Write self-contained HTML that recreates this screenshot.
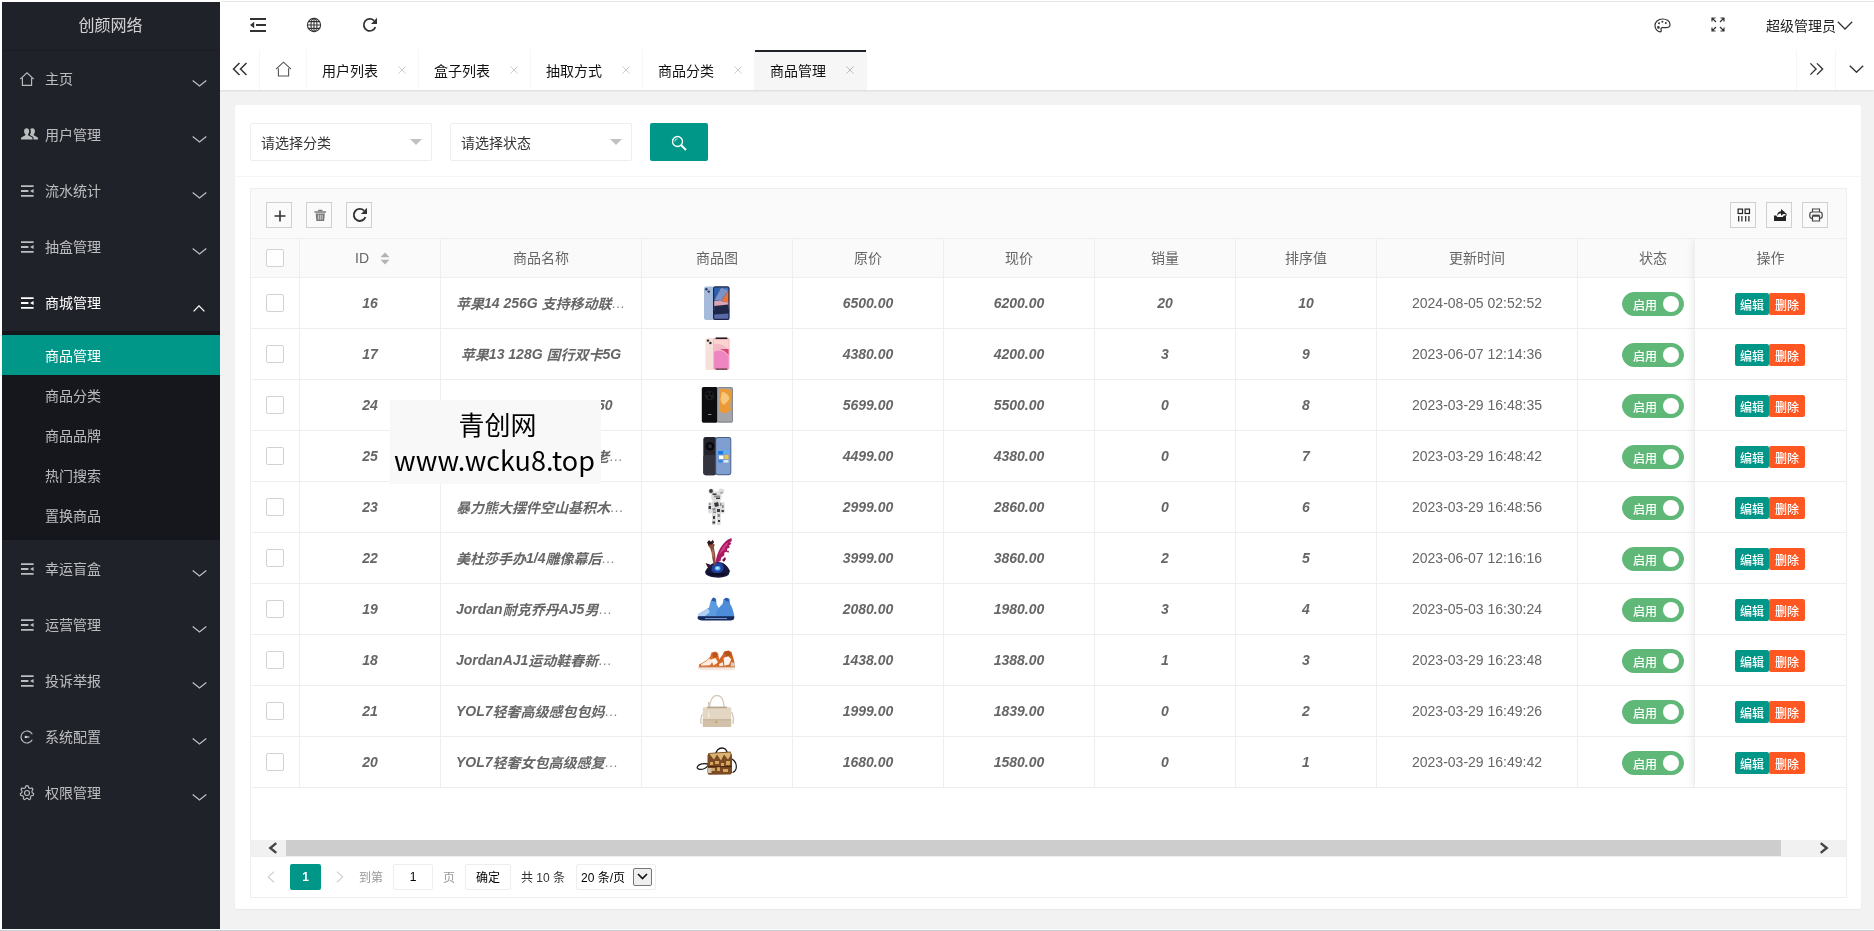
<!DOCTYPE html>
<html lang="zh-CN">
<head>
<meta charset="utf-8">
<title>商品管理</title>
<style>
*{box-sizing:border-box;}
html,body{margin:0;padding:0;}
html{overflow:hidden;background:#fff;}
body{width:1874px;height:931px;overflow:hidden;position:relative;background:#fff;will-change:transform;
 font-family:"Liberation Sans","Noto Sans CJK SC",sans-serif;font-size:14px;color:#333;line-height:1;}
.abs{position:absolute;}
svg{display:block;}
/* ---------- sidebar ---------- */
#side{position:absolute;left:2px;top:2px;width:218px;height:927px;background:#20222A;overflow:hidden;}
#logo{position:absolute;left:-1px;top:0;width:219px;height:47px;line-height:48px;text-align:center;color:rgba(255,255,255,.8);font-size:16px;box-shadow:0 1px 2px 0 rgba(0,0,0,.15);}
.mi{position:absolute;left:0;width:218px;height:56px;color:rgba(255,255,255,.7);}
.mi .tx{position:absolute;left:43px;top:20px;font-size:14px;line-height:16px;white-space:nowrap;}
.mi .ic{position:absolute;left:17px;top:20px;width:16px;height:16px;}
.mi .ar{position:absolute;left:190px;top:29px;width:15px;height:7px;}
.mi.on{color:#fff;}
#child{position:absolute;left:0;top:329px;width:218px;height:209px;background:rgba(0,0,0,.3);}
.ci{position:absolute;left:0;width:218px;height:40px;color:rgba(255,255,255,.7);}
.ci span{position:absolute;left:43px;top:13px;font-size:14px;line-height:16px;white-space:nowrap;}
.ci.on{background:#009688;color:#fff;}
/* ---------- header ---------- */
#topline{position:absolute;left:222px;top:1px;width:1652px;height:1px;background:#e6e6e6;}
#hdr{position:absolute;left:220px;top:2px;width:1654px;height:48px;background:#fff;}
#tabs{position:absolute;left:220px;top:50px;width:1654px;height:40px;background:#fff;box-shadow:0 1px 2px 0 rgba(0,0,0,.1);}
.tab{position:absolute;top:0;height:40px;border-right:1px solid #f6f6f6;}
.tab .t{position:absolute;left:15px;top:13px;font-size:14px;line-height:16px;color:#111;white-space:nowrap;}
.tab .x{position:absolute;left:90px;top:15px;width:10px;height:10px;}
.tab.on{background:#f6f6f6;}
.tab.on:before{content:"";position:absolute;left:0;top:0;width:100%;height:2px;background:#20222A;}
#bg{position:absolute;left:220px;top:90px;width:1654px;height:841px;background:#f2f2f2;z-index:-1;}
/* ---------- card ---------- */
#card{position:absolute;left:235px;top:105px;width:1626px;height:804px;background:#fff;border-radius:2px;box-shadow:0 1px 2px 0 rgba(0,0,0,.05);}
.sel{position:absolute;top:123px;height:38px;width:182px;border:1px solid #eee;border-radius:2px;background:#fff;}
.sel span{position:absolute;left:10px;top:11px;font-size:14px;line-height:16px;color:#333;white-space:nowrap;}
.sel i{position:absolute;right:9px;top:15px;width:0;height:0;border:6px solid transparent;border-top-color:#c2c2c2;}
#sbtn{position:absolute;left:650px;top:123px;width:58px;height:38px;background:#009688;border-radius:2px;}
#cardline{position:absolute;left:235px;top:176px;width:1626px;height:1px;background:#f6f6f6;}
/* ---------- table ---------- */
#tbl{position:absolute;left:250px;top:188px;width:1597px;height:710px;border:1px solid #eee;background:#fff;}
#tool{position:absolute;left:0;top:0;width:1595px;height:50px;background:#fafafa;border-bottom:1px solid #eee;}
.tb{position:absolute;top:13px;width:26px;height:26px;border:1px solid #d0d0d0;background:#fafafa;}
#thead{position:absolute;left:0;top:50px;width:1595px;height:39px;background:#fafafa;border-bottom:1px solid #eee;}
.th{position:absolute;top:0;height:38px;border-right:1px solid #eee;text-align:center;font-size:14px;line-height:39px;color:#666;white-space:nowrap;overflow:hidden;}
.row{position:absolute;left:0;width:1595px;height:51px;border-bottom:1px solid #eee;}
.td{position:absolute;top:0;height:50px;border-right:1px solid #eee;text-align:center;font-size:14px;line-height:50px;color:#666;white-space:nowrap;overflow:hidden;}
.td.b{font-weight:bold;font-style:italic;}
.td .c{position:relative;top:1px;}
.td .el{font-weight:normal;color:#888;}
.cb{position:absolute;left:15px;width:18px;height:18px;border:1px solid #d2d2d2;border-radius:2px;background:#fff;}
.sw{position:absolute;width:62px;height:24px;border-radius:12px;background:#5FB878;border:1px solid #5FB878;}
.sw em{position:absolute;left:10px;top:5.500px;font-style:normal;font-weight:500;font-size:12px;line-height:14px;color:#fff;}
.sw i{position:absolute;right:4px;top:3px;width:16px;height:16px;border-radius:8px;background:#fff;}
#fix{position:absolute;left:1443px;top:50px;width:152px;border-left:1px solid #eee;height:549px;background:#fff;box-shadow:-1px 0 8px rgba(0,0,0,.08);clip-path:inset(0 0 0 -12px);}
.fr{position:absolute;left:0;width:151px;height:51px;border-bottom:1px solid #eee;background:#fff;}
.btn{position:absolute;top:15px;height:22px;width:34px;border-radius:2px;color:#fff;font-size:12px;line-height:27px;text-align:center;overflow:hidden;font-weight:500;}
.btn.e{background:#009688;left:40px;}
.btn.d{background:#FF5722;left:74px;width:36px;}
#hs{position:absolute;left:0;top:651px;width:1595px;height:16px;background:#f1f1f1;}
#hs b{position:absolute;left:35px;top:0;width:1495px;height:16px;background:#cdcdcd;}
/* pager */
#pg{position:absolute;left:0;top:667px;width:1595px;height:40px;border-top:1px solid #eee;font-size:12px;color:#333;}
#pg .p{position:absolute;top:7px;height:26px;line-height:28px;white-space:nowrap;overflow:hidden;}
/* watermark */
#wm{position:absolute;left:390px;top:400px;width:211px;height:84px;background:#f8f8f8;color:#000;white-space:nowrap;font-family:"Noto Sans CJK SC",sans-serif;}
#wm span{position:absolute;left:0;width:211px;text-align:center;}
#wm .a{top:6px;font-size:26px;line-height:36px;left:2px}
#wm .b{top:42px;font-size:27px;line-height:36px;left:-1px}
#botline{position:absolute;left:0;top:929px;width:1874px;height:2px;background:#f8fcfe;border-bottom:1px solid #c9ced3;}

.pi{filter:blur(.35px);}
</style>
</head>
<body>
<div id="side">
<div id="logo">创颜网络</div>
<div class="mi" style="top:49px"><svg class="ic" viewBox="0 0 16 16"><path d="M1.300 8.200 L8 1.800 L14.700 8.200 M3.400 7 V14.300 H12.600 V7" fill="none" stroke="currentColor" stroke-width="1.150"/></svg><span class="tx">主页</span><svg class="ar" viewBox="0 0 15 7"><path d="M0.700 0.600 L7.500 6 L14.300 0.600" fill="none" stroke="currentColor" stroke-width="1.300"/></svg></div>
<div class="mi" style="top:105px"><svg class="ic" style="left:19px;width:17px;height:17px;top:19px" viewBox="0 0 16 16"><path d="M5.300 2.200c1.500 0 2.400 1.200 2.400 2.800 0 1.200-.5 2.200-1.100 2.800v1l3.600 1.700c.4.2.6.5.6.9v1.400H0v-1.400c0-.4.2-.7.6-.9L4.100 8.800v-1C3.400 7.200 2.900 6.200 2.900 5c0-1.600 .9-2.800 2.400-2.800z M10.700 2.200c1.500 0 2.400 1.200 2.400 2.800 0 1.200-.5 2.200-1.100 2.800v1l3.400 1.700c.4.2.6.5.6.9v1.400h-4.200v-1.600c0-.6-.3-1.100-.9-1.400L8.300 8.500c.6-.9 1-2 1-3.300 0-.9-.2-1.700-.6-2.400.5-.4 1.200-.6 2-.6z" fill="currentColor"/></svg><span class="tx">用户管理</span><svg class="ar" viewBox="0 0 15 7"><path d="M0.700 0.600 L7.500 6 L14.300 0.600" fill="none" stroke="currentColor" stroke-width="1.300"/></svg></div>
<div class="mi" style="top:161px"><svg class="ic" viewBox="0 0 16 16"><path d="M2 2.300h12.600v1.800H2z M2 7.100h7.400v1.800H2z M2 11.900h12.600v1.800H2z M11 8 L14.600 5.900 V10.100z" fill="currentColor"/></svg><span class="tx">流水统计</span><svg class="ar" viewBox="0 0 15 7"><path d="M0.700 0.600 L7.500 6 L14.300 0.600" fill="none" stroke="currentColor" stroke-width="1.300"/></svg></div>
<div class="mi" style="top:217px"><svg class="ic" viewBox="0 0 16 16"><path d="M2 2.300h12.600v1.800H2z M2 7.100h7.400v1.800H2z M2 11.900h12.600v1.800H2z M11 8 L14.600 5.900 V10.100z" fill="currentColor"/></svg><span class="tx">抽盒管理</span><svg class="ar" viewBox="0 0 15 7"><path d="M0.700 0.600 L7.500 6 L14.300 0.600" fill="none" stroke="currentColor" stroke-width="1.300"/></svg></div>
<div class="mi on" style="top:273px"><svg class="ic" viewBox="0 0 16 16"><path d="M2 2.300h12.600v1.800H2z M2 7.100h7.400v1.800H2z M2 11.900h12.600v1.800H2z M11 8 L14.600 5.900 V10.100z" fill="currentColor"/></svg><span class="tx">商城管理</span><svg class="ar" style="left:191px;top:30px;width:12px" viewBox="0 0 12 7"><path d="M0.600 6.400 L6 0.900 L11.400 6.400" fill="none" stroke="currentColor" stroke-width="1.300"/></svg></div>
<div class="mi" style="top:539px"><svg class="ic" viewBox="0 0 16 16"><path d="M2 2.300h12.600v1.800H2z M2 7.100h7.400v1.800H2z M2 11.900h12.600v1.800H2z M11 8 L14.600 5.900 V10.100z" fill="currentColor"/></svg><span class="tx">幸运盲盒</span><svg class="ar" viewBox="0 0 15 7"><path d="M0.700 0.600 L7.500 6 L14.300 0.600" fill="none" stroke="currentColor" stroke-width="1.300"/></svg></div>
<div class="mi" style="top:595px"><svg class="ic" viewBox="0 0 16 16"><path d="M2 2.300h12.600v1.800H2z M2 7.100h7.400v1.800H2z M2 11.900h12.600v1.800H2z M11 8 L14.600 5.900 V10.100z" fill="currentColor"/></svg><span class="tx">运营管理</span><svg class="ar" viewBox="0 0 15 7"><path d="M0.700 0.600 L7.500 6 L14.300 0.600" fill="none" stroke="currentColor" stroke-width="1.300"/></svg></div>
<div class="mi" style="top:651px"><svg class="ic" viewBox="0 0 16 16"><path d="M2 2.300h12.600v1.800H2z M2 7.100h7.400v1.800H2z M2 11.900h12.600v1.800H2z M11 8 L14.600 5.900 V10.100z" fill="currentColor"/></svg><span class="tx">投诉举报</span><svg class="ar" viewBox="0 0 15 7"><path d="M0.700 0.600 L7.500 6 L14.300 0.600" fill="none" stroke="currentColor" stroke-width="1.300"/></svg></div>
<div class="mi" style="top:707px"><svg class="ic" viewBox="0 0 16 16"><path d="M13.300 5.200 A6 6 0 1 0 13.300 10.800" fill="none" stroke="currentColor" stroke-width="1.200"/><path d="M6.200 8h4.200" stroke="currentColor" stroke-width="1.300"/><circle cx="6.800" cy="8" r="1.200" fill="currentColor"/></svg><span class="tx">系统配置</span><svg class="ar" viewBox="0 0 15 7"><path d="M0.700 0.600 L7.500 6 L14.300 0.600" fill="none" stroke="currentColor" stroke-width="1.300"/></svg></div>
<div class="mi" style="top:763px"><svg class="ic" style="left:16px;top:19px;width:18px;height:18px" viewBox="0 0 16 16"><circle cx="8" cy="8" r="2.200" fill="none" stroke="currentColor" stroke-width="1"/><path d="M8 1.500 l1 .2 .5 1.600 1.300 .7 1.600-.5 .9 1.300 -.9 1.400 .2 1.500 1.400 .9 -.4 1.500 -1.700 .3 -.9 1.200 .3 1.600 -1.400 .7 -1.200-1.100 h-1.400 l-1.200 1.100 -1.400-.7 .3-1.600 -.9-1.200 -1.700-.3 -.4-1.500 1.400-.9 .2-1.500 -.9-1.400 .9-1.300 1.600 .5 1.300-.7 .5-1.600z" fill="none" stroke="currentColor" stroke-width="1" stroke-linejoin="round"/></svg><span class="tx">权限管理</span><svg class="ar" viewBox="0 0 15 7"><path d="M0.700 0.600 L7.500 6 L14.300 0.600" fill="none" stroke="currentColor" stroke-width="1.300"/></svg></div>
<div id="child">
<div class="ci on" style="top:4px"><span>商品管理</span></div>
<div class="ci" style="top:44px"><span>商品分类</span></div>
<div class="ci" style="top:84px"><span>商品品牌</span></div>
<div class="ci" style="top:124px"><span>热门搜索</span></div>
<div class="ci" style="top:164px"><span>置换商品</span></div>
</div>
</div>
<div id="bg"></div>
<div id="topline"></div>
<div id="hdr">
<svg class="abs" style="left:30px;top:15px" width="16" height="16" viewBox="0 0 16 16"><path d="M0 1h16v2H0z M6 7h10v2H6z M0 13h16v2H0z M4.200 4.800 V11.200 L0 8z" fill="#333"/></svg>
<svg class="abs" style="left:86px;top:15px" width="16" height="16" viewBox="0 0 16 16"><g fill="none" stroke="#333" stroke-width="1.100"><circle cx="8" cy="8" r="6.600"/><ellipse cx="8" cy="8" rx="3" ry="6.600"/><path d="M8 1.400V14.600 M1.400 8H14.600 M2.400 4.600H13.600 M2.400 11.400H13.600"/></g></svg>
<svg class="abs" style="left:142px;top:15px" width="16" height="16" viewBox="0 0 16 16"><path d="M12.040 3.660 A6 6 0 1 0 13.440 9.950" fill="none" stroke="#333" stroke-width="1.800"/><path d="M15 0.700 L15 6.900 L9 6.900z" fill="#333"/></svg>
<svg class="abs" style="left:1434px;top:16px" width="17" height="15" viewBox="0 0 17 15"><path d="M8.500 1 C4 1 1 4 1 7.500 C1 11 3.500 13.800 6 13.800 C7.600 13.800 7.400 12.400 7 11.600 C6.600 10.600 7.200 9.600 8.400 9.600 H12 C14.400 9.600 16 8.200 16 6.400 C16 3.400 12.800 1 8.500 1z" fill="none" stroke="#333" stroke-width="1.200"/><circle cx="5" cy="5.200" r="1" fill="#333"/><circle cx="8.400" cy="3.800" r="1" fill="#333"/><circle cx="11.800" cy="5" r="1" fill="#333"/><circle cx="4.400" cy="9.400" r="1.300" fill="#333"/></svg>
<svg class="abs" style="left:1491px;top:15px" width="14" height="15" viewBox="0 0 14 15"><g fill="none" stroke="#333" stroke-width="1.200"><path d="M1 4.500V1H4.500 M1 1 L5 5"/><path d="M13 4.500V1H9.500 M13 1 L9 5"/><path d="M1 10.500V14H4.500 M1 14 L5 10"/><path d="M13 10.500V14H9.500 M13 14 L9 10"/></g></svg>
<span class="abs" style="left:1546px;top:16px;font-size:14px;line-height:16px;color:#222;white-space:nowrap">超级管理员</span>
<svg class="abs" style="left:1617px;top:19px" width="16" height="9" viewBox="0 0 16 9"><path d="M0.800 0.800 L8 8 L15.200 0.800" fill="none" stroke="#333" stroke-width="1.300"/></svg>
</div>
<div id="tabs">
<div class="tab" style="left:0;width:40px"><svg class="abs" style="left:12px;top:12px" width="16" height="14" viewBox="0 0 16 14"><path d="M7.500 1 L1.500 7 L7.500 13 M14.500 1 L8.500 7 L14.500 13" fill="none" stroke="#333" stroke-width="1.500"/></svg></div>
<div class="tab" style="left:40px;width:47px"><svg class="abs" style="left:15px;top:11px" width="17" height="16" viewBox="0 0 17 16"><path d="M1 8.200 L8.500 1.200 L16 8.200 M3.400 7.200 V15 H13.600 V7.200" fill="none" stroke="#555" stroke-width="1.100"/></svg></div>
<div class="tab" style="left:87px;width:112px"><span class="t">用户列表</span><svg class="x" viewBox="0 0 10 10"><path d="M1.500 1.500 L8.500 8.500 M8.500 1.500 L1.500 8.500" stroke="#ccc" stroke-width="1" fill="none"/></svg></div>
<div class="tab" style="left:199px;width:112px"><span class="t">盒子列表</span><svg class="x" viewBox="0 0 10 10"><path d="M1.500 1.500 L8.500 8.500 M8.500 1.500 L1.500 8.500" stroke="#ccc" stroke-width="1" fill="none"/></svg></div>
<div class="tab" style="left:311px;width:112px"><span class="t">抽取方式</span><svg class="x" viewBox="0 0 10 10"><path d="M1.500 1.500 L8.500 8.500 M8.500 1.500 L1.500 8.500" stroke="#ccc" stroke-width="1" fill="none"/></svg></div>
<div class="tab" style="left:423px;width:112px"><span class="t">商品分类</span><svg class="x" viewBox="0 0 10 10"><path d="M1.500 1.500 L8.500 8.500 M8.500 1.500 L1.500 8.500" stroke="#ccc" stroke-width="1" fill="none"/></svg></div>
<div class="tab on" style="left:535px;width:112px"><span class="t">商品管理</span><svg class="x" viewBox="0 0 10 10"><path d="M1.500 1.500 L8.500 8.500 M8.500 1.500 L1.500 8.500" stroke="#bbb" stroke-width="1" fill="none"/></svg></div>
<div class="tab" style="left:1576px;width:40px;border-left:1px solid #f6f6f6"><svg class="abs" style="left:12px;top:12px" width="15" height="14" viewBox="0 0 16 14"><path d="M1.500 1 L7.500 7 L1.500 13 M8.500 1 L14.500 7 L8.500 13" fill="none" stroke="#333" stroke-width="1.500"/></svg></div>
<div class="tab" style="left:1616px;width:38px;border-right:0"><svg class="abs" style="left:13px;top:15px" width="15" height="8" viewBox="0 0 15 8"><path d="M0.800 0.800 L7.500 7.200 L14.200 0.800" fill="none" stroke="#333" stroke-width="1.400"/></svg></div>
</div>
<div id="card"></div>
<div class="sel" style="left:250px"><span>请选择分类</span><i></i></div>
<div class="sel" style="left:450px"><span>请选择状态</span><i></i></div>
<div id="sbtn"><svg class="abs" style="left:21px;top:12px" width="16" height="16" viewBox="0 0 16 16"><circle cx="6.500" cy="6.500" r="5" fill="none" stroke="#fff" stroke-width="1.300"/><path d="M10.200 10.200 L15 15" stroke="#fff" stroke-width="2" fill="none"/><path d="M3.800 6.500 A2.700 2.700 0 0 1 6.500 3.800" stroke="#fff" stroke-width="0.800" fill="none"/></svg></div>
<div id="cardline"></div>
<div id="tbl">
<div id="tool">
<div class="tb" style="left:15px"><svg class="abs" style="left:7px;top:7px" width="12" height="12" viewBox="0 0 12 12"><path d="M6 0.500V11.500 M0.500 6H11.500" stroke="#333" stroke-width="1.600"/></svg></div>
<div class="tb" style="left:55px"><svg class="abs" style="left:7px;top:6px" width="12.500" height="12.500" viewBox="0 0 12 12"><path d="M0.500 2.200h11v1.300h-11z M4 0.600h4v1.200H4z M1.600 4.200h8.800l-.700 7.400H2.300z" fill="#777"/><path d="M4.200 5.500v4.800 M6 5.500v4.800 M7.800 5.500v4.800" stroke="#fafafa" stroke-width="0.700"/></svg></div>
<div class="tb" style="left:95px"><svg class="abs" style="left:5px;top:4px" width="16" height="16" viewBox="0 0 16 16"><path d="M12.040 3.660 A6 6 0 1 0 13.440 9.950" fill="none" stroke="#333" stroke-width="1.900"/><path d="M15 0.700 L15 6.900 L9 6.900z" fill="#333"/></svg></div>
<div class="tb" style="left:1479px"><svg class="abs" style="left:6px;top:5px" width="14" height="14" viewBox="0 0 14 14"><g fill="none" stroke="#222" stroke-width="1.200"><rect x="1.100" y="1.100" width="4.400" height="4.400"/><rect x="8.100" y="1.100" width="4.400" height="4.400"/><path d="M1.700 8V13.500 M4.900 8V13.500 M8.700 8V13.500 M11.900 8V13.500"/></g></svg></div>
<div class="tb" style="left:1515px"><svg class="abs" style="left:6px;top:4px" width="14" height="15" viewBox="0 0 14 15"><path d="M1 8.500h2.200l1 1.600h5.600l1-1.600H13V14H1z" fill="#222"/><path d="M4.200 9 C4 6.200 5.500 4.500 8 4.300 V2 L12.200 5.400 L8 8.800 V6.500 C6.200 6.500 5.200 7.300 4.200 9z" fill="#222"/><path d="M9.500 6.500h3.500v2.500" fill="none" stroke="#222" stroke-width="1"/></svg></div>
<div class="tb" style="left:1551px"><svg class="abs" style="left:6px;top:5px" width="14" height="14" viewBox="0 0 14 14"><g fill="none" stroke="#444" stroke-width="1.200"><path d="M3.500 4V1h7v3"/><rect x="0.800" y="4" width="12.400" height="6.500" rx="2.400"/><path d="M3.500 8.200h7V13h-7z" fill="#fafafa"/><path d="M3.500 7.300h7" stroke-width="1.400"/></g></svg></div>
</div>
<div id="thead">
<div class="th" style="left:0px;width:49px"><i class="cb" style="top:10px"></i></div>
<div class="th" style="left:49px;width:141px"><span style="position:relative;left:-8px">ID</span><svg class="abs" style="left:80px;top:13px" width="10" height="13" viewBox="0 0 10 13"><path d="M5 0.500 L9.500 5.300 H0.500z M5 12.500 L9.500 7.700 H0.500z" fill="#b2b2b2"/></svg></div>
<div class="th" style="left:190px;width:201px">商品名称</div>
<div class="th" style="left:391px;width:151px">商品图</div>
<div class="th" style="left:542px;width:151px">原价</div>
<div class="th" style="left:693px;width:151px">现价</div>
<div class="th" style="left:844px;width:141px">销量</div>
<div class="th" style="left:985px;width:141px">排序值</div>
<div class="th" style="left:1126px;width:201px">更新时间</div>
<div class="th" style="left:1327px;width:151px">状态</div>
</div>
<div class="row" style="top:89px"><div class="td" style="left:0;width:49px"><i class="cb" style="top:16px"></i></div><div class="td b" style="left:49px;width:141px">16</div><div class="td b" style="left:190px;width:201px;padding:0 0 0 15px;text-align:left"><span class="c">苹果</span>14 256G <span class="c">支持移动联</span><span class="el">…</span></div><div class="td" style="left:391px;width:151px"><svg class="abs pi" style="left:50px;top:0" width="50" height="50" viewBox="692 278 50 50"><rect x="704" y="286.500" width="10.500" height="33.500" rx="2.200" fill="#a6bbdc"/><circle cx="706.400" cy="289.200" r="1.200" fill="#2b3652"/><circle cx="708.800" cy="291.600" r="1.200" fill="#2b3652"/><rect x="713" y="286.300" width="16.600" height="33.800" rx="2.200" fill="#1a2546"/><path d="M714.200 287.600h7l-7 13z" fill="#2c62ad"/><path d="M721.200 287.600h7.200v3z" fill="#3f79c4"/><path d="M728.400 290.600v12l-7.400-1.600z" fill="#e9733a"/><path d="M714.200 300.600l7-13 7.200 3-7.400 10.400z" fill="#7d93c8"/><path d="M714.200 301l6.800 .0 7.400 1.600v6l-14.200 2z" fill="#d9a5b4"/><path d="M714.200 306l14.200-1.500v9l-14.200 1z" fill="#1d2748"/><path d="M714.200 314.500l14.200-1v5.300h-14.200z" fill="#5968a6"/></svg></div><div class="td b" style="left:542px;width:151px">6500.00</div><div class="td b" style="left:693px;width:151px">6200.00</div><div class="td b" style="left:844px;width:141px">20</div><div class="td b" style="left:985px;width:141px">10</div><div class="td" style="left:1126px;width:201px">2024-08-05 02:52:52</div><div class="td" style="left:1327px;width:151px"><div class="sw" style="left:44px;top:14px"><em>启用</em><i></i></div></div></div>
<div class="row" style="top:140px"><div class="td" style="left:0;width:49px"><i class="cb" style="top:16px"></i></div><div class="td b" style="left:49px;width:141px">17</div><div class="td b" style="left:190px;width:201px;padding:0 15px;text-align:center"><span class="c">苹果</span>13 128G <span class="c">国行双卡</span>5G</div><div class="td" style="left:391px;width:151px"><svg class="abs pi" style="left:50px;top:0" width="50" height="50" viewBox="692 329 50 50"><rect x="705.400" y="338" width="9.500" height="32" rx="2.200" fill="#f5e1d9"/><circle cx="708" cy="340.600" r="1.200" fill="#26262a"/><circle cx="710.400" cy="343" r="1.200" fill="#26262a"/><rect x="713" y="337.400" width="16.600" height="32.700" rx="2.400" fill="#f6b9c6"/><rect x="715.500" y="337.400" width="12" height="1.600" rx=".8" fill="#1a1a1c"/><path d="M714 340h14.600v10c-4-5-9-7-14.600-6z" fill="#fbd3cf"/><path d="M714 352c5-3 10-1 14.600 4v13h-14.600z" fill="#ee86c2"/><path d="M720 349c3 1 6 3 8.600 6v-6z" fill="#d9457a"/><rect x="715.500" y="368.400" width="12" height="1.400" rx=".7" fill="#54323a"/></svg></div><div class="td b" style="left:542px;width:151px">4380.00</div><div class="td b" style="left:693px;width:151px">4200.00</div><div class="td b" style="left:844px;width:141px">3</div><div class="td b" style="left:985px;width:141px">9</div><div class="td" style="left:1126px;width:201px">2023-06-07 12:14:36</div><div class="td" style="left:1327px;width:151px"><div class="sw" style="left:44px;top:14px"><em>启用</em><i></i></div></div></div>
<div class="row" style="top:191px"><div class="td" style="left:0;width:49px"><i class="cb" style="top:16px"></i></div><div class="td b" style="left:49px;width:141px">24</div><div class="td b" style="left:190px;width:201px;padding:0 15px;text-align:center"><span class="c" style="visibility:hidden">华为</span> HUAWEI Mate 50</div><div class="td" style="left:391px;width:151px"><svg class="abs pi" style="left:50px;top:0" width="50" height="50" viewBox="692 380 50 50"><rect x="701.800" y="387" width="16" height="35.700" rx="1.800" fill="#0d0d0f"/><circle cx="709.500" cy="395.500" r="4.800" fill="#1e1e22"/><circle cx="707.500" cy="393.800" r="1.300" fill="#050506"/><circle cx="711.500" cy="393.800" r="1.300" fill="#050506"/><circle cx="709.500" cy="397.400" r="1.300" fill="#050506"/><rect x="708" y="414" width="3.400" height=".9" fill="#9a9a9a"/><rect x="717" y="387" width="16" height="35.700" rx="1.800" fill="#85878d"/><rect x="717.800" y="388" width="14.200" height="33.600" rx="1.200" fill="#a3a5aa"/><path d="M719 389.500c4-1.500 9-1 12.400 1v10c-2 3-1 6-.4 9-2 3-5 4-8 3.600-3-.8-4.600-3.800-4-7.600z" fill="#eb9a38"/><path d="M722 392c3 0 6 2 7 5s-2 5-4 7-4-2-4.500-5z" fill="#f6c77a"/></svg></div><div class="td b" style="left:542px;width:151px">5699.00</div><div class="td b" style="left:693px;width:151px">5500.00</div><div class="td b" style="left:844px;width:141px">0</div><div class="td b" style="left:985px;width:141px">8</div><div class="td" style="left:1126px;width:201px">2023-03-29 16:48:35</div><div class="td" style="left:1327px;width:151px"><div class="sw" style="left:44px;top:14px"><em>启用</em><i></i></div></div></div>
<div class="row" style="top:242px"><div class="td" style="left:0;width:49px"><i class="cb" style="top:16px"></i></div><div class="td b" style="left:49px;width:141px">25</div><div class="td b" style="left:190px;width:201px;padding:0 0 0 15px;text-align:left"><span class="c" style="visibility:hidden">华为</span> Mate40Pro 5G<span class="c" style="visibility:hidden">版</span><span class="c">老</span><span class="el">…</span></div><div class="td" style="left:391px;width:151px"><svg class="abs pi" style="left:50px;top:0" width="50" height="50" viewBox="692 431 50 50"><rect x="703.300" y="437" width="13" height="38.200" rx="2.400" fill="#23232b"/><rect x="703.300" y="455" width="13" height="20.200" rx="2.400" fill="#34343f"/><circle cx="710" cy="446.200" r="4.300" fill="#08080a"/><circle cx="710" cy="446.200" r="2" fill="#2a2a33"/><rect x="715.300" y="437" width="16" height="38.200" rx="2.400" fill="#4d5f86"/><rect x="716.200" y="438" width="14.200" height="36.200" rx="1.800" fill="#7f9fd0"/><rect x="718" y="451" width="5" height="3.500" fill="#1c78de"/><rect x="724" y="450" width="5" height="3.500" fill="#5fb0f2"/><rect x="719" y="455.500" width="4.500" height="3.500" fill="#fff"/><rect x="724.500" y="455" width="4" height="4" fill="#f3c53c"/><rect x="718.500" y="460" width="4" height="2.600" fill="#2f86e6"/><rect x="723.500" y="460" width="5" height="2.600" fill="#dfe9f7"/></svg></div><div class="td b" style="left:542px;width:151px">4499.00</div><div class="td b" style="left:693px;width:151px">4380.00</div><div class="td b" style="left:844px;width:141px">0</div><div class="td b" style="left:985px;width:141px">7</div><div class="td" style="left:1126px;width:201px">2023-03-29 16:48:42</div><div class="td" style="left:1327px;width:151px"><div class="sw" style="left:44px;top:14px"><em>启用</em><i></i></div></div></div>
<div class="row" style="top:293px"><div class="td" style="left:0;width:49px"><i class="cb" style="top:16px"></i></div><div class="td b" style="left:49px;width:141px">23</div><div class="td b" style="left:190px;width:201px;padding:0 0 0 15px;text-align:left"><span class="c">暴力熊大摆件空山基积木</span><span class="el">…</span></div><div class="td" style="left:391px;width:151px"><svg class="abs pi" style="left:50px;top:0" width="50" height="50" viewBox="692 482 50 50"><g fill="#dcdcdc"><circle cx="711.300" cy="491.300" r="2.800"/><circle cx="721.300" cy="491.300" r="2.800"/><rect x="711.200" y="491.500" width="10.300" height="9.500" rx="3.500"/><rect x="711.700" y="501" width="9.400" height="12.500" rx="1.500"/><rect x="708.200" y="502" width="3.600" height="11.500" rx="1.600"/><rect x="721" y="502" width="3.600" height="11.500" rx="1.600"/><rect x="712" y="512.500" width="4" height="12.500" rx="1.200"/><rect x="716.800" y="512.500" width="4" height="12.500" rx="1.200"/></g><g fill="#3a3a3e"><circle cx="711" cy="491" r="1.900"/><path d="M712.500 493.500h4v1.600h-4z M716 497.500h4v1.600h-4z M714 503l4-1 1 4-4 1z M708.600 506h2.400v3h-2.400z M717 509h3v3h-3z M713 516h2v3h-2z M718 520h2v2h-2z M721.500 510h2.400v2h-2.400z M712.500 521.500h2.500v2h-2.500z"/></g><g fill="#8e8e92"><path d="M714 495.600h6v1.600h-6z M712.500 508h3v2.400h-3z M717.500 514h2.400v3h-2.400z M720 503h1.500v3h-1.500z M720.500 492h2v1.500h-2z M713 511.500h3v1.500h-3z M709 503h1.500v2h-1.500z M722 505h1.600v3h-1.600z"/></g></svg></div><div class="td b" style="left:542px;width:151px">2999.00</div><div class="td b" style="left:693px;width:151px">2860.00</div><div class="td b" style="left:844px;width:141px">0</div><div class="td b" style="left:985px;width:141px">6</div><div class="td" style="left:1126px;width:201px">2023-03-29 16:48:56</div><div class="td" style="left:1327px;width:151px"><div class="sw" style="left:44px;top:14px"><em>启用</em><i></i></div></div></div>
<div class="row" style="top:344px"><div class="td" style="left:0;width:49px"><i class="cb" style="top:16px"></i></div><div class="td b" style="left:49px;width:141px">22</div><div class="td b" style="left:190px;width:201px;padding:0 0 0 15px;text-align:left"><span class="c">美杜莎手办</span>1/4<span class="c">雕像幕后</span><span class="el">…</span></div><div class="td" style="left:391px;width:151px"><svg class="abs pi" style="left:50px;top:0" width="50" height="50" viewBox="692 533 50 50"><path d="M705 572c2-5 7-9.500 12.500-10 6-.5 10 4 12.500 9l-1.500 4c-3 2-8 2.800-12 2.600-4-.2-8-1-10.500-3z" fill="#15163a"/><path d="M711.500 567c2-4 6-5.500 9.500-4 3 2 3.500 6.500 .5 9-3 2-8 1.500-10-1.500z" fill="#2140a0"/><ellipse cx="717.600" cy="568.200" rx="2.800" ry="2.300" fill="#62b8f2"/><ellipse cx="717.400" cy="568" rx="1.200" ry="1" fill="#d8f2ff"/><path d="M715.500 563c.5-5 2-10 4.500-14.500 2-3.500 5-7 8-9l3.500-1.500 .3 3-1.800 1.200 1.400 1.600-2.400 1.600 .8 2.200-2.800 1.200 .3 2.600-2.800 1.200-.3 3-2.900 2-.8 3.400z" fill="#a81a62"/><path d="M719 555c1-4 3.500-8 6.500-11l3-2-1.500 4-2 1.500 .3 2-2.300 1.200z" fill="#cf3f86"/><path d="M722 560l3-3 1 2-2 3z M726 552l2.500-1.500 .5 2z" fill="#7a1248"/><path d="M709 541.500l1.800 1.200 1.700-1.200 .8 2.600 1.700 .6-1.200 2 .5 3 .9 5 .5 8.500-1.800 2.500-1.400-6.500-1-7-1.300-4-2.400-3z" fill="#8a4c3a"/><path d="M712.500 548l1 4 .3 5-1.300-1z" fill="#c08a6a"/><path d="M707 542.500l2-2.300 2 1.600 2-2 1 3-2.500 1.600-3 .4z" fill="#2a1420"/><path d="M705.500 563l4.500 1.500 2 3.500-4.500-1z" fill="#351838"/><path d="M708 573h18l-2 2.500h-13z" fill="#0c0c24"/></svg></div><div class="td b" style="left:542px;width:151px">3999.00</div><div class="td b" style="left:693px;width:151px">3860.00</div><div class="td b" style="left:844px;width:141px">2</div><div class="td b" style="left:985px;width:141px">5</div><div class="td" style="left:1126px;width:201px">2023-06-07 12:16:16</div><div class="td" style="left:1327px;width:151px"><div class="sw" style="left:44px;top:14px"><em>启用</em><i></i></div></div></div>
<div class="row" style="top:395px"><div class="td" style="left:0;width:49px"><i class="cb" style="top:16px"></i></div><div class="td b" style="left:49px;width:141px">19</div><div class="td b" style="left:190px;width:201px;padding:0 0 0 15px;text-align:left">Jordan<span class="c">耐克乔丹</span>AJ5<span class="c">男</span><span class="el">…</span></div><div class="td" style="left:391px;width:151px"><svg class="abs pi" style="left:50px;top:0" width="50" height="50" viewBox="692 584 50 50"><path d="M698 614.500c3-2.500 8-4.500 11-7l1.500-6 2.500-3 3 .8 .8 5.500c2 3 4 6.500 5.500 10.500l-.3 3.200h-24z" fill="#5d9be0"/><path d="M698 614.500c3-2.500 6.800-4.200 9.600-6.200l2.400 3.700-5 4-7 .6z" fill="#b3d0f1"/><path d="M716.500 613.500c1.500-1.500 3-3 4.500-4l1.500 3-3 2.500z" fill="#8fbaec"/><path d="M716 612c2-3 4-6 6.500-8l1-4.500 3-1.700 3 1 .5 5c2 3 3.600 7.500 4.200 12l-.3 2.700h-18z" fill="#4c8cdb"/><path d="M711 600.500l2-3 2.500 .8 .5 3.500z M723.500 599.500l2.500-1.700 2.500 .9 .5 3.300z" fill="#2b57a8"/><path d="M697.800 616.300h36.500l-.2 2.600c-1 1.200-3 1.500-5 1.500h-27c-2.500 0-4-.6-4.500-1.800z" fill="#17285c"/><path d="M705 618.500h22" stroke="#8ab6ea" stroke-width=".8"/></svg></div><div class="td b" style="left:542px;width:151px">2080.00</div><div class="td b" style="left:693px;width:151px">1980.00</div><div class="td b" style="left:844px;width:141px">3</div><div class="td b" style="left:985px;width:141px">4</div><div class="td" style="left:1126px;width:201px">2023-05-03 16:30:24</div><div class="td" style="left:1327px;width:151px"><div class="sw" style="left:44px;top:14px"><em>启用</em><i></i></div></div></div>
<div class="row" style="top:446px"><div class="td" style="left:0;width:49px"><i class="cb" style="top:16px"></i></div><div class="td b" style="left:49px;width:141px">18</div><div class="td b" style="left:190px;width:201px;padding:0 0 0 15px;text-align:left">JordanAJ1<span class="c">运动鞋春新</span><span class="el">…</span></div><div class="td" style="left:391px;width:151px"><svg class="abs pi" style="left:50px;top:0" width="50" height="50" viewBox="692 635 50 50"><path d="M699 664.500c4-2 8-4.500 11-7.500l1.500-4.500 4-1 2.500 1.500 1 5c1 2.500 1.500 5 1.500 8l-.3 2.800h-21.500z" fill="#d96f2b"/><path d="M701 664.300c3-1.500 6-3.600 8.200-5.800l3.800 2.500-3 4.200-8.500 .5z" fill="#fbeade"/><path d="M711 659.500l4.500-1.500 2.500 4.500-4.500 3z" fill="#fff5ee"/><path d="M712 653.500l3-1 2 1.200 .5 3-4 1.300z" fill="#b9531c"/><path d="M717.500 663c1.500-3 3-6 5-8l1.500-3.500 4.500-1 3 1.500 1.500 5c1 3 1.700 6 1.700 9.500l-.2 2.300h-17z" fill="#cf6424"/><path d="M723.500 658l4.500-2 3.200 3.200-2 5.300-4.700 1.200z" fill="#fdf3ea"/><path d="M719 664l3.500-2 1 3.500-4 1z" fill="#fbe6d8"/><path d="M724.500 652l3.500-1 2.500 1.300 .8 3-5 1.500z" fill="#b5501a"/><path d="M731 662l3.500 1v4.500h-4z" fill="#d3cdc8"/><path d="M699 666.800h36v2.400c-1 .8-2.500 1-4 1h-28c-2 0-3.500-.4-4-1.200z" fill="#f3e8df"/><path d="M699 666.900h36" stroke="#c4632a" stroke-width=".8"/></svg></div><div class="td b" style="left:542px;width:151px">1438.00</div><div class="td b" style="left:693px;width:151px">1388.00</div><div class="td b" style="left:844px;width:141px">1</div><div class="td b" style="left:985px;width:141px">3</div><div class="td" style="left:1126px;width:201px">2023-03-29 16:23:48</div><div class="td" style="left:1327px;width:151px"><div class="sw" style="left:44px;top:14px"><em>启用</em><i></i></div></div></div>
<div class="row" style="top:497px"><div class="td" style="left:0;width:49px"><i class="cb" style="top:16px"></i></div><div class="td b" style="left:49px;width:141px">21</div><div class="td b" style="left:190px;width:201px;padding:0 0 0 15px;text-align:left">YOL7<span class="c">轻奢高级感包包妈</span><span class="el">…</span></div><div class="td" style="left:391px;width:151px"><svg class="abs pi" style="left:50px;top:0" width="50" height="50" viewBox="692 686 50 50"><path d="M709.500 709c0-8 3-13.500 7.500-13.500s7 5.500 7 13.500" fill="none" stroke="#d7ccbc" stroke-width="1.300"/><path d="M708.600 702l1.200 8" stroke="#cfc2b0" stroke-width="1.600"/><path d="M702.500 714c-1.500 2-2 5-1.500 10 M731.500 712c1.800 3 2.200 7 1.500 12" fill="none" stroke="#c9bba6" stroke-width="1.100"/><rect x="702.800" y="707.200" width="28.400" height="19.700" rx="1.200" fill="#e3d6c3"/><rect x="707" y="706.600" width="20" height="1.600" fill="#b9a68c"/><rect x="702.800" y="719.800" width="28.400" height="7.100" rx="1" fill="#d2c0a8"/><rect x="702.800" y="719.400" width="28.400" height=".8" fill="#bba88e"/><circle cx="716.300" cy="722" r=".9" fill="#b39650"/><path d="M708.400 710l1.600 6-1.400 2-1.300-2z" fill="#efe6d8"/></svg></div><div class="td b" style="left:542px;width:151px">1999.00</div><div class="td b" style="left:693px;width:151px">1839.00</div><div class="td b" style="left:844px;width:141px">0</div><div class="td b" style="left:985px;width:141px">2</div><div class="td" style="left:1126px;width:201px">2023-03-29 16:49:26</div><div class="td" style="left:1327px;width:151px"><div class="sw" style="left:44px;top:14px"><em>启用</em><i></i></div></div></div>
<div class="row" style="top:548px"><div class="td" style="left:0;width:49px"><i class="cb" style="top:16px"></i></div><div class="td b" style="left:49px;width:141px">20</div><div class="td b" style="left:190px;width:201px;padding:0 0 0 15px;text-align:left">YOL7<span class="c">轻奢女包高级感复</span><span class="el">…</span></div><div class="td" style="left:391px;width:151px"><svg class="abs pi" style="left:50px;top:0" width="50" height="50" viewBox="692 737 50 50"><path d="M715 756c1-5 4-8 7-8s5 2.500 5.500 6" fill="none" stroke="#1c1a1a" stroke-width="1.300"/><path d="M708 764c-4-1-9 0-10.500 2.500s3 3.500 6 2.500 4-2.500 5-4" fill="none" stroke="#1c1a1a" stroke-width="1.300"/><path d="M732 759c3 2 5 6 4 10-.6 2-2 3-3.500 3.500" fill="none" stroke="#1c1a1a" stroke-width="1.200"/><path d="M708.500 753l22-1.500 1.500 3.500v18l-1.500 1.500-22 .3-1-2v-17z" fill="#7b4a22"/><path d="M709 753.500l5 6 3-5 4 6 3-6 4 5 2.500-4v-3l-21 1.300z" fill="#d9b574"/><path d="M710 762h3v3h-3z M715 761h4v3h-4z M721 763h3v3h-3z M726 761h4v4h-4z M711 768h4v3h-4z M717 767h3v4h-3z M723 769h5v3h-5z" fill="#d2a65c"/><path d="M708 766h24v1.200h-24z" fill="#4a2a12"/><rect x="708" y="768" width="3.500" height="5" fill="#cfc4ae"/></svg></div><div class="td b" style="left:542px;width:151px">1680.00</div><div class="td b" style="left:693px;width:151px">1580.00</div><div class="td b" style="left:844px;width:141px">0</div><div class="td b" style="left:985px;width:141px">1</div><div class="td" style="left:1126px;width:201px">2023-03-29 16:49:42</div><div class="td" style="left:1327px;width:151px"><div class="sw" style="left:44px;top:14px"><em>启用</em><i></i></div></div></div>
<div id="fix"><div class="th" style="left:0;width:151px;border-right:0;border-bottom:1px solid #eee;height:39px;background:#fafafa">操作</div><div class="fr" style="top:39px"><span class="btn e">编辑</span><span class="btn d">删除</span></div>
<div class="fr" style="top:90px"><span class="btn e">编辑</span><span class="btn d">删除</span></div>
<div class="fr" style="top:141px"><span class="btn e">编辑</span><span class="btn d">删除</span></div>
<div class="fr" style="top:192px"><span class="btn e">编辑</span><span class="btn d">删除</span></div>
<div class="fr" style="top:243px"><span class="btn e">编辑</span><span class="btn d">删除</span></div>
<div class="fr" style="top:294px"><span class="btn e">编辑</span><span class="btn d">删除</span></div>
<div class="fr" style="top:345px"><span class="btn e">编辑</span><span class="btn d">删除</span></div>
<div class="fr" style="top:396px"><span class="btn e">编辑</span><span class="btn d">删除</span></div>
<div class="fr" style="top:447px"><span class="btn e">编辑</span><span class="btn d">删除</span></div>
<div class="fr" style="top:498px"><span class="btn e">编辑</span><span class="btn d">删除</span></div></div>
<div id="hs"><svg class="abs" style="left:17px;top:2px" width="10" height="12" viewBox="0 0 9 11"><path d="M7.500 1 L2 5.500 L7.500 10" fill="none" stroke="#444" stroke-width="2.200"/></svg><b></b><svg class="abs" style="left:1568px;top:2px" width="10" height="12" viewBox="0 0 9 11"><path d="M1.500 1 L7 5.500 L1.500 10" fill="none" stroke="#444" stroke-width="2.200"/></svg></div>
<div id="pg">
<svg class="abs" style="left:16px;top:14px" width="8" height="12" viewBox="0 0 8 12"><path d="M7 0.700 L1.200 6 L7 11.300" fill="none" stroke="#d2d2d2" stroke-width="1.200"/></svg>
<div class="p" style="left:39px;width:31px;background:#009688;border-radius:2px;color:#fff;text-align:center;font-weight:bold;line-height:26px">1</div>
<svg class="abs" style="left:85px;top:14px" width="8" height="12" viewBox="0 0 8 12"><path d="M1 0.700 L6.800 6 L1 11.300" fill="none" stroke="#d2d2d2" stroke-width="1.200"/></svg>
<div class="p" style="left:108px;color:#999">到第</div>
<div class="p" style="left:142px;width:40px;border:1px solid #eee;border-radius:2px;text-align:center;line-height:25px;color:#000">1</div>
<div class="p" style="left:192px;color:#999">页</div>
<div class="p" style="left:214px;width:46px;border:1px solid #eee;border-radius:2px;text-align:center;line-height:26px;color:#000">确定</div>
<div class="p" style="left:270px;color:#333">共 10 条</div>
<div class="p" style="left:325px;width:80px;border:1px solid #eee;border-radius:2px;line-height:26px;color:#000;padding-left:4px">20 条/页<span class="abs" style="left:56px;top:3px;width:19px;height:18px;border:1px solid #767676;border-radius:2px;background:#efefef"><svg class="abs" style="left:3px;top:4px" width="11" height="7" viewBox="0 0 11 7"><path d="M1 1 L5.500 5.500 L10 1" fill="none" stroke="#111" stroke-width="1.600"/></svg></span></div>
</div>
</div>
<div id="wm"><span class="a">青创网</span><span class="b">www.wcku8.top</span></div>
<div id="botline"></div>
</body>
</html>
